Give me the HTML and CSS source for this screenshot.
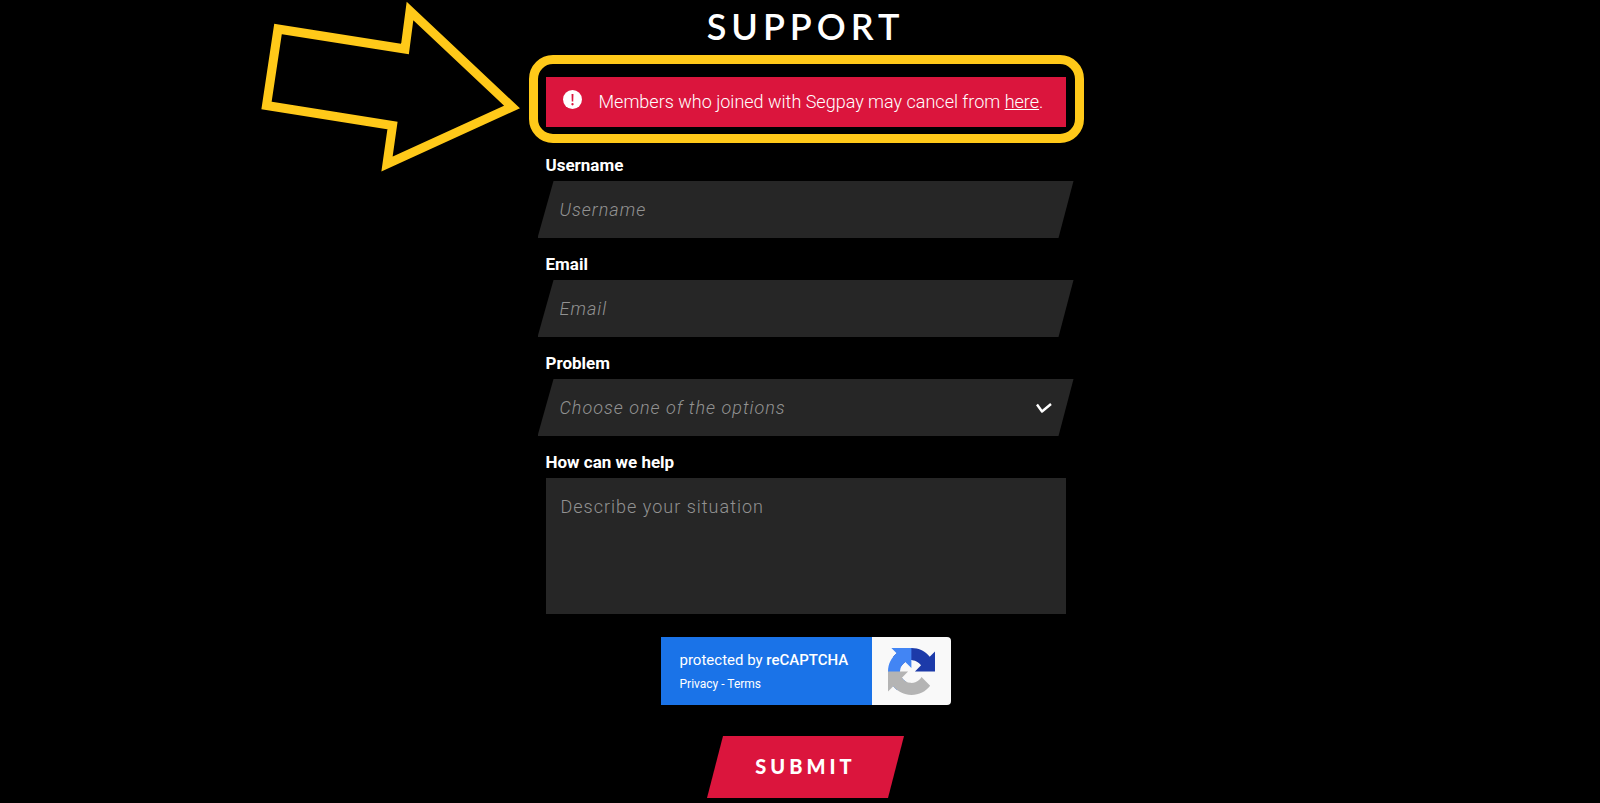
FILE: index.html
```html
<!DOCTYPE html>
<html lang="en">
<head>
<meta charset="utf-8">
<meta name="viewport" content="width=device-width, initial-scale=1">
<title>Support</title>
<link rel="stylesheet" href="styles.css">
</head>
<body>
<main class="support">
  <h1 class="title">Support</h1>

  <div class="notice">
    <svg class="notice-icon" viewBox="0 0 18 18" aria-hidden="true">
      <circle cx="9" cy="9" r="9" fill="#fff"/>
      <path d="M8.100 3.800h1.800l-.2 7H8.300z" fill="#db153d"/>
      <circle cx="9" cy="13.500" r="1.100" fill="#db153d"/>
    </svg>
    <p class="notice-text">Members who joined with Segpay may cancel from <a href="#cancel">here</a>.</p>
    <svg class="arrow" viewBox="0 0 260 172" aria-hidden="true">
      <path d="M17 29L144 49L149 11L251 107L126 164L131.500 125.500L5.500 105.500Z" fill="none" stroke="#ffc919" stroke-width="9" stroke-miterlimit="10"/>
    </svg>
  </div>

  <form class="form" action="#">
    <div class="field">
      <label for="username">Username</label>
      <input class="control slanted" id="username" type="text" placeholder="Username">
    </div>
    <div class="field">
      <label for="email">Email</label>
      <input class="control slanted" id="email" type="email" placeholder="Email">
    </div>
    <div class="field">
      <label for="problem">Problem</label>
      <div class="select-wrap">
        <select class="control slanted" id="problem">
          <option>Choose one of the options</option>
        </select>
        <svg class="chevron" viewBox="0 0 18 12" aria-hidden="true">
          <path d="M2 2.500L7 9.500L16 2" fill="none" stroke="#fff" stroke-width="2.400" stroke-linejoin="round"/>
        </svg>
      </div>
    </div>
    <div class="field">
      <label for="help">How can we help</label>
      <textarea class="control" id="help" placeholder="Describe your situation"></textarea>
    </div>

    <div class="captcha">
      <div class="captcha-info">
        <p class="captcha-title">protected by <strong>reCAPTCHA</strong></p>
        <p class="captcha-links"><a href="#privacy">Privacy</a> - <a href="#terms">Terms</a></p>
      </div>
      <div class="captcha-badge">
        <svg class="captcha-logo" viewBox="0 0 64 64" aria-hidden="true">
          <path fill="#1c3aa9" d="M64 31.955l-.033-1.370V4.687l-7.160 7.160C50.948 4.674 42.033.093 32.050.093c-10.400 0-19.622 4.960-25.458 12.640l11.736 11.860a15.550 15.550 0 0 1 4.754-5.334c2.050-1.600 4.952-2.906 8.968-2.906.485 0 .860.057 1.135.163 4.976.393 9.288 3.140 11.828 7.124l-8.307 8.307z"/>
          <path fill="#4285f4" d="M31.862.094l-1.370.033H4.594l7.160 7.160C4.580 13.147 0 22.060 0 32.046c0 10.400 4.960 19.622 12.640 25.458L24.500 45.768a15.550 15.550 0 0 1-5.334-4.754c-1.600-2.050-2.906-4.952-2.906-8.968 0-.485.057-.860.163-1.135.393-4.976 3.140-9.288 7.124-11.828l8.307 8.307z"/>
          <path fill="#b4b4b4" d="M.001 32.045l.033 1.370v25.898l7.160-7.160c5.860 7.173 14.774 11.754 24.760 11.754 10.400 0 19.622-4.960 25.458-12.640l-11.736-11.860a15.550 15.550 0 0 1-4.754 5.334c-2.050 1.600-4.952 2.906-8.968 2.906-.485 0-.860-.057-1.135-.163-4.976-.393-9.288-3.140-11.828-7.124l8.307-8.307z"/>
        </svg>
      </div>
    </div>

    <button class="submit" type="submit">Submit</button>
  </form>
</main>
</body>
</html>
```

FILE: styles.css
```css
* {
  box-sizing: border-box;
}

body {
  margin: 0;
  padding-left: 11px;
  background: #000;
  color: #fff;
  font-family: Roboto, "Liberation Sans", sans-serif;
}

p {
  margin: 0;
}

.support {
  max-width: 520px;
  margin: 0 auto;
  padding: 3px 0 4px;
}

.title {
  margin: 0 0 28px;
  font-family: Lato, "Open Sans", sans-serif;
  font-size: 36px;
  font-weight: 600;
  line-height: 46px;
  letter-spacing: 5px;
  text-align: center;
  text-transform: uppercase;
}

.notice {
  position: relative;
  display: flex;
  align-items: center;
  gap: 17px;
  min-height: 50px;
  padding: 12px 17px;
  background: #db153d;
}

/* highlight frame drawn around the notice */
.notice::after {
  content: "";
  position: absolute;
  inset: -22px -18px -16px -17px;
  border: 9px solid #ffc919;
  border-radius: 24px;
  pointer-events: none;
}

.notice-icon {
  flex: none;
  width: 19px;
  height: 19px;
  margin-bottom: 5px;
}

.notice-text {
  font-size: 18px;
  font-weight: 300;
  line-height: 26px;
}

.notice-text a {
  color: inherit;
}

.arrow {
  position: absolute;
  right: calc(100% + 25px);
  top: -77px;
  width: 260px;
  height: 172px;
}

.form {
  display: flex;
  flex-direction: column;
  gap: 14px;
  margin-top: 26px;
}

.field {
  display: flex;
  flex-direction: column;
}

.field label {
  margin-bottom: 4px;
  font-size: 17px;
  font-weight: 700;
  line-height: 24px;
}

.control {
  display: block;
  width: 100%;
  border: 0;
  border-radius: 0;
  outline: 0;
  background: #262626;
  color: #929292;
  font-family: inherit;
  font-size: 18px;
  font-weight: 300;
  letter-spacing: 1px;
}

.control::placeholder {
  color: #929292;
  opacity: 1;
}

.slanted {
  width: calc(100% + 16px);
  height: 57px;
  margin: 0 -8px;
  padding: 0 22px;
  font-style: italic;
  clip-path: polygon(16px 0, 100% 0, calc(100% - 15px) 100%, 0 100%);
}

.select-wrap {
  position: relative;
}

select.control {
  appearance: none;
}

.chevron {
  position: absolute;
  right: 13px;
  top: 23px;
  width: 18px;
  height: 12px;
  pointer-events: none;
}

textarea.control {
  height: 136px;
  padding: 17px 15px;
  line-height: 24px;
  resize: none;
}

.captcha {
  display: flex;
  align-self: center;
  height: 68px;
  margin-top: 9px;
  overflow: hidden;
  border-radius: 0 4px 4px 0;
}

.captcha-info {
  width: 211px;
  padding: 12px 19px;
  background: #1a73e8;
}

.captcha-title {
  font-size: 15px;
  line-height: 22px;
}

.captcha-title strong {
  font-weight: 500;
}

.captcha-links {
  font-size: 12px;
  line-height: 26px;
}

.captcha-links a {
  color: inherit;
  text-decoration: none;
}

.captcha-badge {
  display: flex;
  width: 79px;
  padding: 11px 16px;
  background: #f9f9f9;
}

.captcha-logo {
  width: 47px;
  height: 47px;
}

.submit {
  align-self: center;
  width: 197px;
  height: 62px;
  margin-top: 17px;
  padding: 0 0 2px;
  border: 0;
  background: #db153d;
  color: #fff;
  font-family: Lato, "Open Sans", sans-serif;
  font-size: 20px;
  font-weight: 900;
  letter-spacing: 4px;
  text-transform: uppercase;
  clip-path: polygon(16px 0, 100% 0, calc(100% - 16px) 100%, 0 100%);
}
```
